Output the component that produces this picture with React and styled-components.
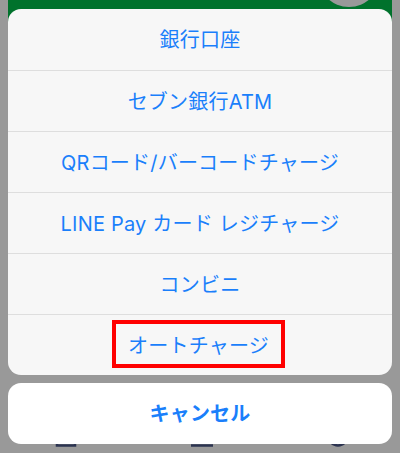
import styled, { createGlobalStyle } from 'styled-components';

const Global = createGlobalStyle`
  html, body {
    margin: 0;
    padding: 0;
    background: #999999;
  }
  body {
    font-family: Inter, "Noto Sans CJK JP", sans-serif;
  }
`;

const Page = styled.div`
  position: relative;
  width: 400px;
  height: 453px;
  overflow: hidden;
  background: #999999;
`;

// dimmed app behind the sheet
const Screen = styled.div`
  height: 100%;
  margin: 0 8px;
  display: flex;
  flex-direction: column;
`;

const Header = styled.div`
  position: relative;
  height: 60px;
  background: #00722c;
  overflow: hidden;
`;

const Avatar = styled.div`
  position: absolute;
  top: -55px;
  left: 310px;
  width: 62px;
  height: 62px;
  border-radius: 50%;
  background: #999999;
`;

const TabBar = styled.div`
  margin-top: auto;
  display: flex;
  justify-content: space-between;
  align-items: flex-end;
  padding: 0 43px 6px 47px;
`;

const TabIcon = styled.svg`
  width: 22px;
  height: 22px;
  display: block;
  stroke: #2b3350;
  stroke-width: 2.5;
  fill: none;
`;

const Sheet = styled.div`
  position: absolute;
  top: 9px;
  left: 8px;
  right: 8px;
  display: flex;
  flex-direction: column;
  gap: 8px;
`;

const Group = styled.div`
  display: flex;
  flex-direction: column;
  background: ${p => (p.cancel ? '#ffffff' : '#f7f7f7')};
  border-radius: 13px;
  overflow: hidden;
`;

const Item = styled.div`
  height: 61px;
  display: flex;
  align-items: center;
  justify-content: center;
  padding-bottom: 2px;
  box-sizing: border-box;
  color: #1a7ffb;
  font-size: 20px;
  font-weight: ${p => (p.bold ? 700 : 400)};
  letter-spacing: 0.2px;
  & + & {
    border-top: 1px solid #dedede;
  }
`;

const Highlight = styled.span`
  display: inline-flex;
  align-items: center;
  justify-content: center;
  box-sizing: border-box;
  width: 173px;
  height: 48px;
  margin-left: -3px;
  border: 4px solid #ff0000;
`;

const options = [
  '銀行口座',
  'セブン銀行ATM',
  'QRコード/バーコードチャージ',
  'LINE Pay カード レジチャージ',
  'コンビニ',
];

const App = () => (
  <Page>
    <Global />
    <Screen>
      <Header>
        <Avatar />
      </Header>
      <TabBar>
        <TabIcon viewBox="0 0 22 22">
          <rect x="2" y="2" width="18" height="18.5" />
        </TabIcon>
        <TabIcon viewBox="0 0 22 22">
          <line x1="0" y1="20.5" x2="22" y2="20.5" />
        </TabIcon>
        <TabIcon viewBox="0 0 22 22">
          <circle cx="11" cy="11" r="9.5" />
        </TabIcon>
      </TabBar>
    </Screen>
    <Sheet>
      <Group>
        {options.map(label => (
          <Item key={label}>{label}</Item>
        ))}
        <Item>
          <Highlight>オートチャージ</Highlight>
        </Item>
      </Group>
      <Group cancel>
        <Item bold>キャンセル</Item>
      </Group>
    </Sheet>
  </Page>
);

export default App;
